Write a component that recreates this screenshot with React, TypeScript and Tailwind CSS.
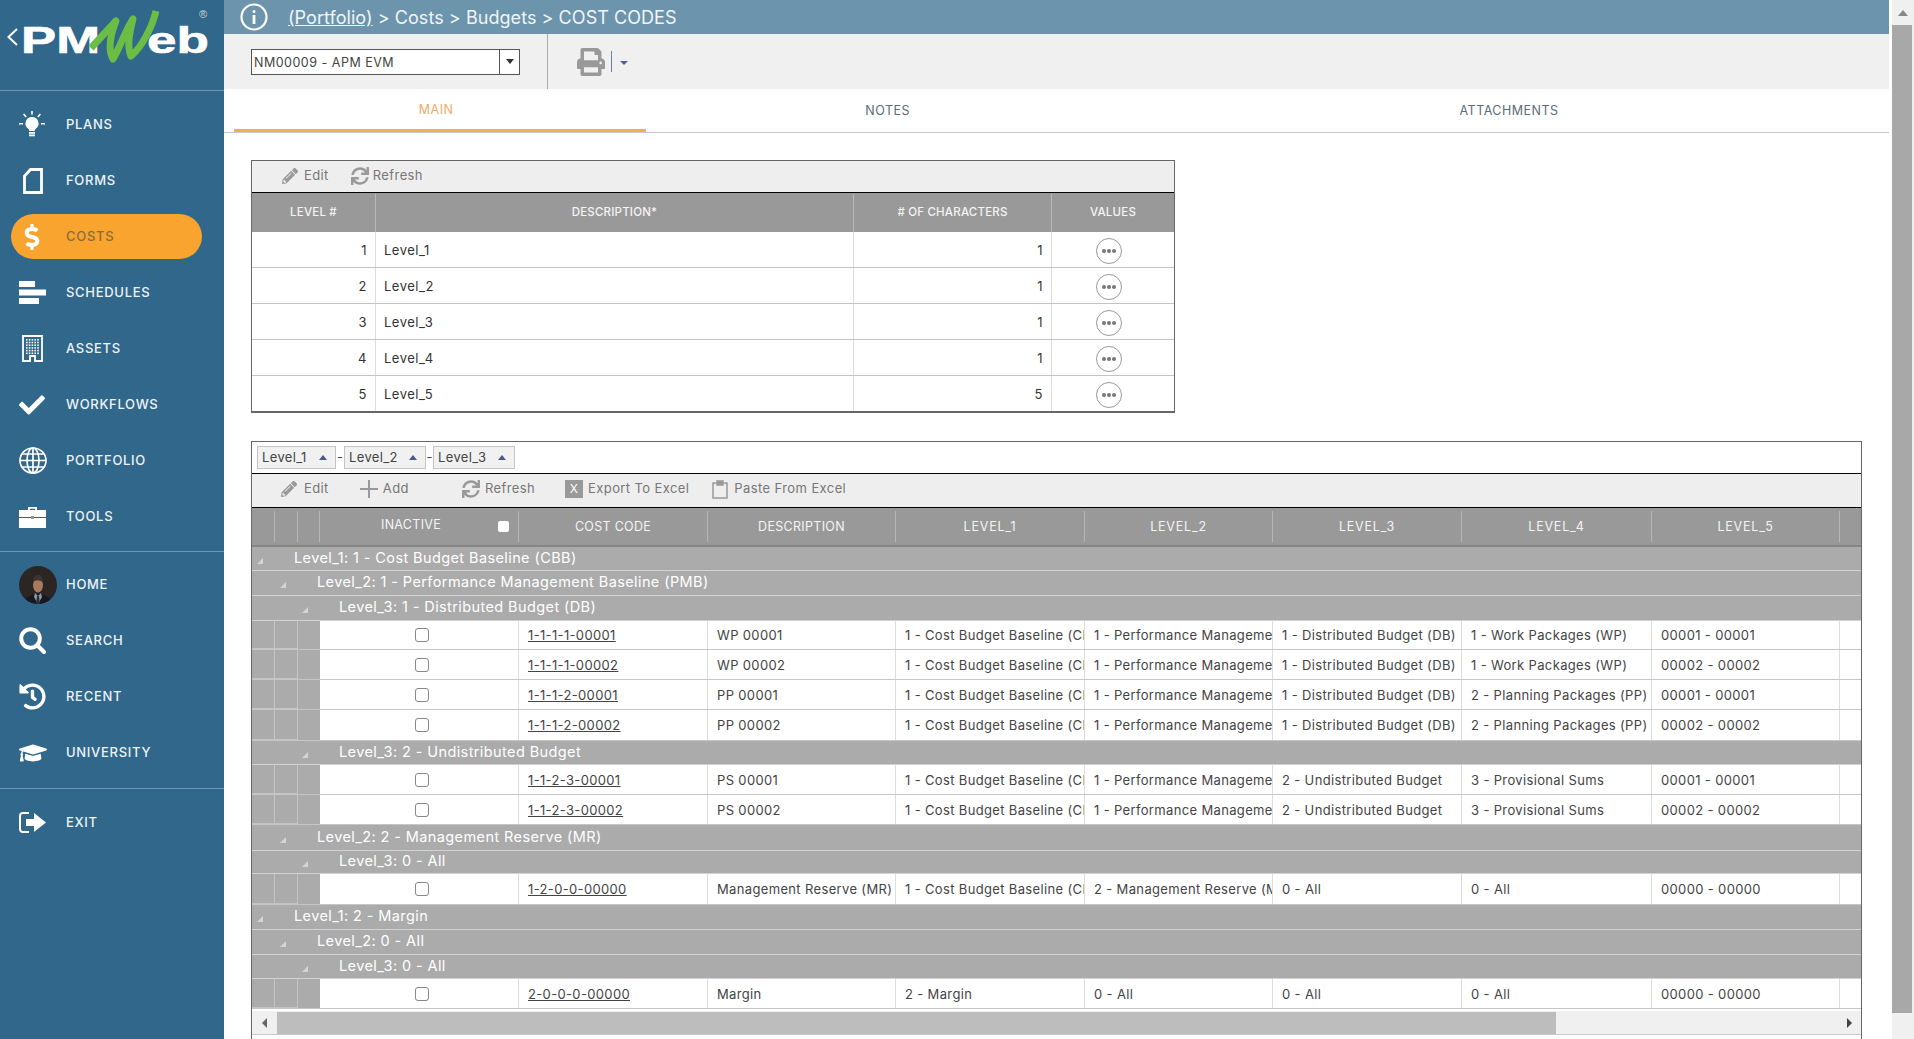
import type { ReactNode } from "react";
import { FaCheck, FaHistory, FaGraduationCap, FaPrint, FaPencilAlt, FaSync, FaDollarSign } from "react-icons/fa";

const font = "font-['Inter','Roboto',sans-serif]";
const gridCols =
  "grid grid-cols-[23px_23px_22px_199px_189px_188px_189px_188px_189px_190px_188px_21px]";

function BulbIcon() {
  return (
    <svg width="26" height="27" viewBox="0 0 26 27" fill="white">
      <path d="M13 6a6.5 6.5 0 0 0-3.8 11.8c.8.7 1 1.3 1 2.2h5.6c0-.9.2-1.500 1-2.200A6.500 6.500 0 0 0 13 6z" />
      <rect x="10" y="21" width="6" height="1.800" />
      <rect x="10" y="23.500" width="6" height="1.800" />
      <path d="M12.200 0h1.600v3.800h-1.600zM0 12h4v1.500H0zM22 12h4v1.500h-4zM4 3.500l1.200-1 2.600 3-1.200 1zM22 3.500l-1.200-1-2.600 3 1.200 1z" />
    </svg>
  );
}

function FormIcon() {
  return (
    <svg width="20" height="26" viewBox="0 0 20 26" fill="none" stroke="white" strokeWidth="2.800" className="ml-[4px]">
      <path d="M7.500 1.500H18.500V24.500H1.500V8z" />
    </svg>
  );
}

function ScheduleIcon() {
  return (
    <svg width="27" height="23" viewBox="0 0 27 23" fill="white">
      <rect x="0" y="0" width="16" height="6" />
      <rect x="0" y="8.500" width="27" height="6" />
      <rect x="0" y="17" width="20" height="6" />
    </svg>
  );
}

function BuildingIcon() {
  const dots: ReactNode[] = [];
  for (let r = 0; r < 6; r++) {
    for (let c = 0; c < 5; c++) {
      dots.push(<rect key={r + "-" + c} x={4 + c * 2.8} y={4 + r * 2.7} width="1.600" height="1.600" fill="white" />);
    }
  }
  return (
    <svg width="21" height="27" viewBox="0 0 21 27" fill="none" className="ml-[3px]">
      <path d="M1 1H20V26H13V21H8V26H1z" stroke="white" strokeWidth="1.800" />
      {dots}
    </svg>
  );
}

function GlobeIcon() {
  return (
    <svg width="28" height="27" viewBox="0 0 28 27" fill="none" stroke="white" strokeWidth="1.700">
      <ellipse cx="14" cy="13.500" rx="13" ry="12.500" />
      <ellipse cx="14" cy="13.500" rx="6" ry="12.500" />
      <path d="M14 1v25M1 13.500h26M3 7h22M3 20h22" />
    </svg>
  );
}

function ToolboxIcon() {
  return (
    <svg width="27" height="22" viewBox="0 0 27 22" fill="white">
      <path d="M9 4V1h9v3h-1.800V2.800h-5.400V4z" />
      <rect x="0" y="4" width="27" height="7" />
      <rect x="0" y="12" width="27" height="10" />
      <rect x="12" y="10" width="3" height="3" fill="#7d9db1" />
    </svg>
  );
}

function Avatar() {
  return (
    <svg width="38" height="38" viewBox="0 0 38 38">
      <defs>
        <clipPath id="avatar-clip">
          <circle cx="19" cy="19" r="19" />
        </clipPath>
      </defs>
      <g clipPath="url(#avatar-clip)">
        <rect width="38" height="38" fill="#2b2523" />
        <path d="M5 38c1-7 8-10 14-10s13 3 14 10z" fill="#15181f" />
        <path d="M16 27l3 3 3-3 1 4-4 7-4-7z" fill="#8f99a6" />
        <path d="M18 30h2l1 8h-4z" fill="#30303c" />
        <ellipse cx="19" cy="19" rx="5" ry="7.500" fill="#a8795f" />
        <path d="M14 17c0-6 2-8 5-8s5 2 5 8c-2-3-8-4-10 0z" fill="#3b3532" />
      </g>
    </svg>
  );
}

function SearchIcon() {
  return (
    <svg width="27" height="27" viewBox="0 0 27 27" fill="none" stroke="white">
      <circle cx="11.500" cy="11.500" r="9.300" strokeWidth="4" />
      <path d="M18 18l7 7" strokeWidth="4" strokeLinecap="round" />
    </svg>
  );
}

function ExitIcon() {
  return (
    <svg width="27" height="21" viewBox="0 0 27 21" fill="white">
      <path d="M10 1H4a3 3 0 0 0-3 3v13a3 3 0 0 0 3 3h6" fill="none" stroke="white" strokeWidth="2" />
      <path d="M7 7h8V1l12 9.500L15 20v-6H7z" />
    </svg>
  );
}

function Logo() {
  return (
    <svg width="224" height="90" viewBox="0 0 224 90">
      <path d="M17 29L8.500 37L17 45" fill="none" stroke="white" strokeWidth="2" />
      <text x="21" y="52.500" fontFamily="'Liberation Sans',sans-serif" fontWeight="700" fontSize="37" fill="white" stroke="white" strokeWidth="0.6" textLength="79" lengthAdjust="spacingAndGlyphs">
        PM
      </text>
      <text x="147" y="52.500" fontFamily="'Liberation Sans',sans-serif" fontWeight="700" fontSize="37" fill="white" stroke="white" strokeWidth="0.6" textLength="62" lengthAdjust="spacingAndGlyphs">
        eb
      </text>
      <path
        d="M91 48L116 21C110 36 108 50 113 59C119 50 125 31 133 19C129 35 127 47 131 56C141 48 152 28 156 11"
        fill="none"
        stroke="#6cbd45"
        strokeWidth="7"
        strokeLinejoin="round"
      />
      <text x="199" y="18" fontFamily="'Liberation Sans',sans-serif" fontSize="11" fill="#c9d5dd">
        ®
      </text>
    </svg>
  );
}

const navTop = [
  { label: "PLANS", icon: <BulbIcon /> },
  { label: "FORMS", icon: <FormIcon /> },
  { label: "COSTS", icon: <FaDollarSign size={26} color="white" />, active: true },
  { label: "SCHEDULES", icon: <ScheduleIcon /> },
  { label: "ASSETS", icon: <BuildingIcon /> },
  { label: "WORKFLOWS", icon: <FaCheck size={26} color="white" /> },
  { label: "PORTFOLIO", icon: <GlobeIcon /> },
  { label: "TOOLS", icon: <ToolboxIcon /> },
];

const navMid = [
  { label: "HOME", icon: <Avatar /> },
  { label: "SEARCH", icon: <SearchIcon /> },
  { label: "RECENT", icon: <FaHistory size={27} color="white" /> },
  { label: "UNIVERSITY", icon: <FaGraduationCap size={28} color="white" /> },
];

function NavItem({ label, icon, active }: { label: string; icon: ReactNode; active?: boolean }) {
  return (
    <div className="flex h-[56px] items-center px-[11px]">
      <div className={"mb-[1px] flex h-[45px] w-[191px] items-center rounded-full pl-[8px] " + (active ? "bg-[#f9a42e]" : "")}>
        <div className="flex w-[47px] items-center">{icon}</div>
        <span className={"pt-[1px] text-[13px] font-medium tracking-[0.7px] " + (active ? "text-[#8b6b3c]" : "text-[#eef3f6]")}>{label}</span>
      </div>
    </div>
  );
}

function Sidebar() {
  return (
    <aside className="flex w-[224px] shrink-0 flex-col bg-[#30678a]">
      <div className="h-[91px] border-b border-[#6f9ab5]">
        <Logo />
      </div>
      <div className="pt-[6px]">
        {navTop.map((n) => (
          <NavItem key={n.label} {...n} />
        ))}
      </div>
      <div className="mt-[6px] border-t border-[#6f9ab5] pt-[5px]">
        {navMid.map((n) => (
          <NavItem key={n.label} {...n} />
        ))}
      </div>
      <div className="mt-[7px] border-t border-[#6f9ab5] pt-[6px]">
        <NavItem label="EXIT" icon={<ExitIcon />} />
      </div>
    </aside>
  );
}

function Caret({ up }: { up?: boolean }) {
  return (
    <span
      className={
        "inline-block h-0 w-0 border-x-[4px] border-x-transparent " +
        (up ? "border-b-[5px] border-b-[#4a5a8c]" : "border-t-[5px] border-t-[#333]")
      }
    />
  );
}

function TopBars() {
  return (
    <>
      <div className="flex h-[34px] items-center bg-[#6c94ac] pl-[15px] text-[18px] tracking-[0.05px] text-[#f2f5f7]">
        <svg width="30" height="30" viewBox="0 0 30 30" fill="none" stroke="white">
          <circle cx="15" cy="15" r="12.500" strokeWidth="2.200" />
          <circle cx="15" cy="9.500" r="1.500" fill="white" stroke="none" />
          <path d="M15 13v9" strokeWidth="2.800" />
        </svg>
        <span className="ml-[19px]">
          <span className="underline">(Portfolio)</span> &gt; Costs &gt; Budgets &gt; COST CODES
        </span>
      </div>
      <div className="flex h-[55px] items-stretch bg-[#f0f0f0]">
        <div className="flex w-[324px] items-center border-r border-[#aaa] pl-[27px]">
          <div className="flex h-[26px] w-[269px] items-stretch border border-[#555] bg-white">
            <span className="flex-1 pl-[2px] pt-[1px] text-[12.5px] leading-[24px] tracking-[0.5px] text-[#444]">NM00009 - APM EVM</span>
            <span className="flex w-[20px] items-center justify-center border-l border-[#555]">
              <Caret />
            </span>
          </div>
        </div>
        <div className="flex items-center pl-[29px]">
          <FaPrint size={28} color="#999" />
          <span className="ml-[6px] h-[21px] w-px bg-[#6a7fa8]" />
          <span className="ml-[8px] mt-[2px] inline-block h-0 w-0 border-x-[4px] border-t-[4px] border-x-transparent border-t-[#4a62a0]" />
        </div>
      </div>
      <div className="flex h-[44px] border-b border-[#c9c9c9] pl-[10px] text-[12.5px] tracking-[0.5px] text-[#5c6c78]">
        <div className="flex w-[415px] items-center justify-center border-b-[3px] border-[#eeb054] pr-[8px] pt-[3px] text-[#f0ab68]">MAIN</div>
        <div className="flex w-[486px] items-center justify-center pt-[1px]">NOTES</div>
        <div className="flex w-[765px] items-center justify-center pt-[1px]">ATTACHMENTS</div>
      </div>
    </>
  );
}

function ToolItem({ icon, label, className }: { icon: ReactNode; label: string; className: string }) {
  return (
    <div className={"flex items-center text-[13px] tracking-[0.4px] text-[#777] " + className}>
      {icon}
      <span>{label}</span>
    </div>
  );
}

const levelRows = [
  ["1", "Level_1", "1"],
  ["2", "Level_2", "1"],
  ["3", "Level_3", "1"],
  ["4", "Level_4", "1"],
  ["5", "Level_5", "5"],
];

function LevelsTable() {
  return (
    <div className="ml-[27px] mt-[27px] w-[924px] border border-b-2 border-[#666]">
      <div className="flex h-[32px] items-center border-b border-black bg-[#eeeeee] pb-[2px]">
        <ToolItem className="ml-[30px]" icon={<FaPencilAlt size={16} color="#999" className="mr-[6px]" />} label="Edit" />
        <ToolItem className="ml-[22px]" icon={<FaSync size={18} color="#999" className="mr-[4px]" />} label="Refresh" />
      </div>
      <div className="grid h-[39px] grid-cols-[124px_478px_198px_122px] bg-[#999] pt-[1px] text-center text-[11.5px] font-medium tracking-[0.2px] text-[#f4f4f4]">
        {["LEVEL #", "DESCRIPTION*", "# OF CHARACTERS", "VALUES"].map((h) => (
          <div key={h} className="flex items-center justify-center border-r border-[#b8b8b8] last:border-r-0">
            {h}
          </div>
        ))}
      </div>
      {levelRows.map(([n, name, chars]) => (
        <div key={n} className="grid h-[36px] grid-cols-[124px_478px_198px_122px] border-b border-[#c4c4c4] text-[13px] tracking-[0.5px] text-[#333] last:h-[35px] last:border-b-0">
          <div className="flex items-center justify-end border-r border-[#ddd] pr-[8px] pt-[3px]">{n}</div>
          <div className="flex items-center border-r border-[#ddd] pl-[8px] pt-[3px]">{name}</div>
          <div className="flex items-center justify-end border-r border-[#ddd] pr-[8px] pt-[3px]">{chars}</div>
          <div className="flex items-center pl-[44px] pt-[2px]">
            <span className="flex h-[26px] w-[26px] items-center justify-center gap-[1px] rounded-full border-[1.5px] border-[#999]">
              <span className="h-[4px] w-[4px] rounded-full bg-[#777]" />
              <span className="h-[4px] w-[4px] rounded-full bg-[#777]" />
              <span className="h-[4px] w-[4px] rounded-full bg-[#777]" />
            </span>
          </div>
        </div>
      ))}
    </div>
  );
}

type GroupRow = { group: 1 | 2 | 3; text: string; h: string };
type DataRow = { code: string; cells: string[]; h: string };

const lv1a = "1 - Cost Budget Baseline (CBB)";
const lv2a = "1 - Performance Management Baseline (PMB)";

const rows: (GroupRow | DataRow)[] = [
  { group: 1, text: "Level_1: 1 - Cost Budget Baseline (CBB)", h: "h-[24px]" },
  { group: 2, text: "Level_2: 1 - Performance Management Baseline (PMB)", h: "h-[25px]" },
  { group: 3, text: "Level_3: 1 - Distributed Budget (DB)", h: "h-[25px]" },
  { code: "1-1-1-1-00001", cells: ["WP 00001", lv1a, lv2a, "1 - Distributed Budget (DB)", "1 - Work Packages (WP)", "00001 - 00001"], h: "h-[29px]" },
  { code: "1-1-1-1-00002", cells: ["WP 00002", lv1a, lv2a, "1 - Distributed Budget (DB)", "1 - Work Packages (WP)", "00002 - 00002"], h: "h-[30px]" },
  { code: "1-1-1-2-00001", cells: ["PP 00001", lv1a, lv2a, "1 - Distributed Budget (DB)", "2 - Planning Packages (PP)", "00001 - 00001"], h: "h-[30px]" },
  { code: "1-1-1-2-00002", cells: ["PP 00002", lv1a, lv2a, "1 - Distributed Budget (DB)", "2 - Planning Packages (PP)", "00002 - 00002"], h: "h-[31px]" },
  { group: 3, text: "Level_3: 2 - Undistributed Budget", h: "h-[24px]" },
  { code: "1-1-2-3-00001", cells: ["PS 00001", lv1a, lv2a, "2 - Undistributed Budget", "3 - Provisional Sums", "00001 - 00001"], h: "h-[30px]" },
  { code: "1-1-2-3-00002", cells: ["PS 00002", lv1a, lv2a, "2 - Undistributed Budget", "3 - Provisional Sums", "00002 - 00002"], h: "h-[30px]" },
  { group: 2, text: "Level_2: 2 - Management Reserve (MR)", h: "h-[26px]" },
  { group: 3, text: "Level_3: 0 - All", h: "h-[23px]" },
  { code: "1-2-0-0-00000", cells: ["Management Reserve (MR)", lv1a, "2 - Management Reserve (MR)", "0 - All", "0 - All", "00000 - 00000"], h: "h-[31px]" },
  { group: 1, text: "Level_1: 2 - Margin", h: "h-[25px]" },
  { group: 2, text: "Level_2: 0 - All", h: "h-[25px]" },
  { group: 3, text: "Level_3: 0 - All", h: "h-[24px]" },
  { code: "2-0-0-0-00000", cells: ["Margin", "2 - Margin", "0 - All", "0 - All", "0 - All", "00000 - 00000"], h: "h-[30px]" },
];

const groupIndent = { 1: "pl-[5px]", 2: "pl-[28px]", 3: "pl-[50px]" };

function GroupLine({ row }: { row: GroupRow }) {
  return (
    <div className={"flex items-center border-b border-[#d2d2d2] bg-[#ababab] pb-[2px] text-[14.5px] tracking-[0.4px] text-white " + row.h + " " + groupIndent[row.group]}>
      <span className="flex w-[37px] items-center pt-[6px]">
        <span className="h-0 w-0 border-b-[6px] border-l-[6px] border-b-[#d4d4d4] border-l-transparent" />
      </span>
      {row.text}
    </div>
  );
}

function CodeLine({ row }: { row: DataRow }) {
  return (
    <div className={gridCols + " " + row.h + " border-b border-[#c6c6c6] bg-white text-[13px] tracking-[0.35px] text-[#444]"}>
      <div className="border-r border-b border-[#c4c4c4] bg-[#ababab]" />
      <div className="border-r border-b border-[#c4c4c4] bg-[#ababab]" />
      <div className="border-b border-[#ababab] bg-[#ababab]" />
      <div className="flex items-center border-r border-[#ddd] pl-[95px]">
        <span className="h-[14px] w-[14px] rounded-[3px] border border-[#888] bg-white" />
      </div>
      <div className="flex items-center overflow-hidden border-r border-[#ddd] pl-[9px] pt-[2px] whitespace-nowrap underline">{row.code}</div>
      {row.cells.map((c, i) => (
        <div key={i} className="flex items-center overflow-hidden border-r border-[#ddd] pl-[9px] pt-[2px] whitespace-nowrap">
          {c}
        </div>
      ))}
      <div />
    </div>
  );
}

function Chip({ label, w }: { label: string; w: string }) {
  return (
    <div className={"flex h-[23px] items-center justify-between border border-[#c4c4c4] bg-[#f1f1f1] pl-[4px] pr-[8px] text-[13px] tracking-[0.35px] text-[#444] " + w}>
      {label}
      <Caret up />
    </div>
  );
}

function CodesGrid() {
  return (
    <div className="ml-[27px] mt-[28px] w-[1611px] border-x border-t border-[#666] pb-[6px]">
      <div className="flex h-[32px] items-center border-b border-black pl-[5px] text-[13px] text-[#444]">
        <Chip label="Level_1" w="w-[79px]" />
        <span className="w-[8px] text-center">-</span>
        <Chip label="Level_2" w="w-[82px]" />
        <span className="w-[7px] text-center">-</span>
        <Chip label="Level_3" w="w-[82px]" />
      </div>
      <div className="flex h-[34px] items-center border-b border-black bg-[#eeeeee] pb-[3px]">
        <ToolItem className="ml-[29px]" icon={<FaPencilAlt size={16} color="#999" className="mr-[7px]" />} label="Edit" />
        <ToolItem
          className="ml-[31px]"
          icon={
            <svg width="18" height="18" viewBox="0 0 18 18" className="mr-[5px]" stroke="#999" strokeWidth="2">
              <path d="M9 0v18M0 9h18" />
            </svg>
          }
          label="Add"
        />
        <ToolItem className="ml-[53px]" icon={<FaSync size={18} color="#999" className="mr-[5px]" />} label="Refresh" />
        <ToolItem
          className="ml-[30px]"
          icon={<span className="mr-[5px] flex h-[18px] w-[18px] items-center justify-center bg-[#999] text-[12px] text-white">X</span>}
          label="Export To Excel"
        />
        <ToolItem
          className="ml-[23px]"
          icon={
            <svg width="16" height="19" viewBox="0 0 16 19" fill="none" stroke="#999" strokeWidth="1.500" className="mr-[6px]">
              <path d="M4 3H1v15h14V3h-3" />
              <path d="M5 1h6v4H5z" fill="#999" />
            </svg>
          }
          label="Paste From Excel"
        />
      </div>
      <div className={gridCols + " h-[39px] border-b-2 border-[#858585] bg-[#999] text-[12.5px] tracking-[0.3px] text-[#f4f4f4]"}>
        <div className="my-[3px] border-r border-[#b5b5b5]" />
        <div className="my-[3px] border-r border-[#b5b5b5]" />
        <div className="my-[3px] border-r border-[#b5b5b5]" />
        <div className="my-[3px] flex items-center border-r border-[#b5b5b5] pl-[61px]">
          <span className="mb-[2px]">INACTIVE</span>
          <span className="ml-[57px] h-[11px] w-[11px] rounded-[2px] bg-white" />
        </div>
        {["COST CODE", "DESCRIPTION", "LEVEL_1", "LEVEL_2", "LEVEL_3", "LEVEL_4", "LEVEL_5"].map((h) => (
          <div key={h} className={"my-[3px] flex items-center justify-center border-r border-[#b5b5b5] pt-[1px] " + (h.startsWith("LEVEL") ? "tracking-[0.8px]" : "")}>
            {h}
          </div>
        ))}
        <div />
      </div>
      {rows.map((r, i) => ("group" in r ? <GroupLine key={i} row={r} /> : <CodeLine key={i} row={r} />))}
      <div className="mt-[2px] flex h-[24px] items-center border-b border-[#c8c8c8] bg-[#f0f0f0]">
        <span className="flex w-[25px] shrink-0 items-center justify-center">
          <span className="h-0 w-0 border-y-[5px] border-r-[5px] border-y-transparent border-r-[#666]" />
        </span>
        <div className="h-[22px] w-[1279px] bg-[#bdbdbd]" />
        <div className="flex-1" />
        <span className="mr-[9px] h-0 w-0 border-y-[5px] border-l-[5px] border-y-transparent border-l-[#444]" />
      </div>
    </div>
  );
}

export default function App() {
  return (
    <div className={"flex h-[1039px] w-[1914px] overflow-hidden bg-white " + font}>
      <Sidebar />
      <main className="w-[1668px] shrink-0">
        <div className="mr-[3px]">
          <TopBars />
        </div>
        <LevelsTable />
        <CodesGrid />
      </main>
      <div className="flex w-[22px] flex-col bg-[#f0f0f0]">
        <div className="flex h-[25px] items-center justify-center">
          <span className="h-0 w-0 border-x-[5px] border-b-[6px] border-x-transparent border-b-[#888]" />
        </div>
        <div className="mr-[2px] h-[988px] bg-[#a8a8a8]" />
      </div>
    </div>
  );
}
